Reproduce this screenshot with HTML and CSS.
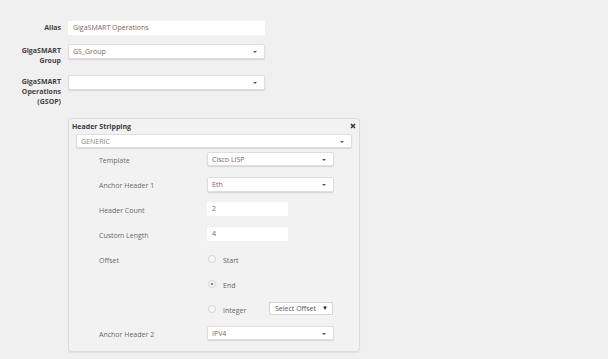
FILE: index.html
```html
<!DOCTYPE html>
<html lang="en">
<head>
    <meta charset="UTF-8">
    <title>GigaSMART Operations</title>
    <link rel="stylesheet" href="styles.css">
</head>
<body>
    <div class="page">
        <div class="form-row">
            <label class="side-label">Alias</label>
            <div class="text-box">GigaSMART Operations</div>
        </div>
        <div class="form-row">
            <label class="side-label">GigaSMART<br>Group</label>
            <div class="select-box">GS_Group<span class="caret"></span></div>
        </div>
        <div class="form-row">
            <label class="side-label">GigaSMART<br>Operations<br>(GSOP)</label>
            <div class="select-box"><span class="caret"></span></div>
        </div>

        <div class="panel">
            <div class="panel-title">
                <span>Header Stripping</span>
                <svg class="close" width="6" height="6" viewBox="0 0 6 6"><path d="M1 1L5 5M5 1L1 5" stroke="#3a3a3a" stroke-width="1.6"/></svg>
            </div>
            <div class="select-box wide">GENERIC<span class="caret"></span></div>

            <div class="field">
                <span class="field-label">Template</span>
                <div class="select-box">Cisco LISP<span class="caret"></span></div>
            </div>
            <div class="field">
                <span class="field-label">Anchor Header 1</span>
                <div class="select-box tall">Eth<span class="caret"></span></div>
            </div>
            <div class="field">
                <span class="field-label">Header Count</span>
                <div class="text-box short">2</div>
            </div>
            <div class="field">
                <span class="field-label">Custom Length</span>
                <div class="text-box short">4</div>
            </div>
            <div class="field offset">
                <span class="field-label">Offset</span>
                <div class="radios">
                    <div class="radio-row"><span class="radio"></span>Start</div>
                    <div class="radio-row"><span class="radio checked"></span>End</div>
                    <div class="radio-row"><span class="radio"></span><span class="radio-text">Integer</span>
                        <div class="offset-select">Select Offset<span class="arrow">&#9660;</span></div>
                    </div>
                </div>
            </div>
            <div class="field last">
                <span class="field-label">Anchor Header 2</span>
                <div class="select-box">IPV4<span class="caret"></span></div>
            </div>
        </div>
    </div>
</body>
</html>
```
FILE: styles.css
```css
body {
    margin: 0;
    background-color: #f0f0f0;
    font-family: "Open Sans", Arial, sans-serif;
    font-size: 7px;
    color: #666;
}
.page {
    padding-top: 21px;
    width: 608px;
    height: 359px;
    box-sizing: border-box;
}
.form-row {
    display: grid;
    grid-template-columns: 61px 197px;
    column-gap: 7px;
    margin-bottom: 8px;
}
.side-label {
    text-align: right;
    font-weight: bold;
    color: #444;
    line-height: 10px;
    padding-top: 3px;
}
.form-row:first-child .side-label {
    padding-top: 2px;
}
.text-box {
    background-color: #fff;
    height: 14px;
    line-height: 14px;
    padding-left: 5px;
    color: #7a6660;
    box-sizing: border-box;
}
.text-box.short {
    width: 81px;
}
.select-box {
    position: relative;
    background-color: #fff;
    border: 1px solid #dedede;
    border-radius: 2px;
    box-shadow: 0 1px 1px rgba(0,0,0,0.12);
    height: 15px;
    line-height: 13px;
    padding-left: 4px;
    color: #7a6660;
    box-sizing: border-box;
}
.caret {
    position: absolute;
    right: 7px;
    top: 6px;
    border-left: 2px solid transparent;
    border-right: 2px solid transparent;
    border-top: 2px solid #555;
}
.form-row:nth-child(3) {
    margin-bottom: 0;
}
.form-row:nth-child(2) .select-box,
.form-row:nth-child(3) .select-box {
    margin-top: 1px;
}
.panel {
    margin: 11px 0 0 68px;
    width: 292px;
    height: 234px;
    box-sizing: border-box;
    background-color: #f2f2f2;
    border: 1px solid #dcdcdc;
    border-radius: 3px;
    box-shadow: 0 1px 1px rgba(0,0,0,0.06);
    padding: 3px 7px 0 3px;
}
.panel-title {
    display: flex;
    justify-content: space-between;
    align-items: center;
    font-weight: bold;
    color: #3a3a3a;
    line-height: 10px;
    margin-bottom: 2px;
}
.close {
    margin-right: -4px;
    margin-top: -3px;
}
.select-box.wide {
    margin-left: 4px;
    width: 276px;
    height: 14px;
    color: #888;
    margin-bottom: 4px;
}
.field {
    display: grid;
    grid-template-columns: 108px 127px;
    margin-left: 27px;
    margin-bottom: 10px;
}
.field-label {
    padding-top: 3px;
    line-height: 12px;
    color: #6a6a6a;
}
.field .select-box {
    height: 14px;
}
.field .select-box.tall {
    height: 15px;
}
.field.offset {
    margin-top: 12px;
    margin-bottom: 10px;
}
.field.offset .field-label {
    padding-top: 1px;
}
.radios {
    display: flex;
    flex-direction: column;
    gap: 13px;
}
.radio-row {
    display: flex;
    align-items: center;
    height: 12px;
    color: #666;
    width: 160px;
}
.radio {
    width: 6px;
    height: 6px;
    border-radius: 50%;
    border: 1px solid #d4d4d4;
    background-color: #f7f7f7;
    margin: 0 7px 0 1px;
    position: relative;
    top: -1px;
}
.radio.checked::after {
    content: "";
    position: absolute;
    left: 2px;
    top: 2px;
    width: 2px;
    height: 2px;
    border-radius: 50%;
    background-color: #555;
}
.radio-text {
    width: 46px;
}
.offset-select {
    position: relative;
    top: -2px;
    width: 64px;
    height: 13px;
    line-height: 11px;
    box-sizing: border-box;
    border: 1px solid #d6d6d6;
    background-color: #fff;
    padding-left: 5px;
    color: #555;
}
.arrow {
    position: absolute;
    right: 4px;
    font-size: 6px;
    color: #222;
}
```
